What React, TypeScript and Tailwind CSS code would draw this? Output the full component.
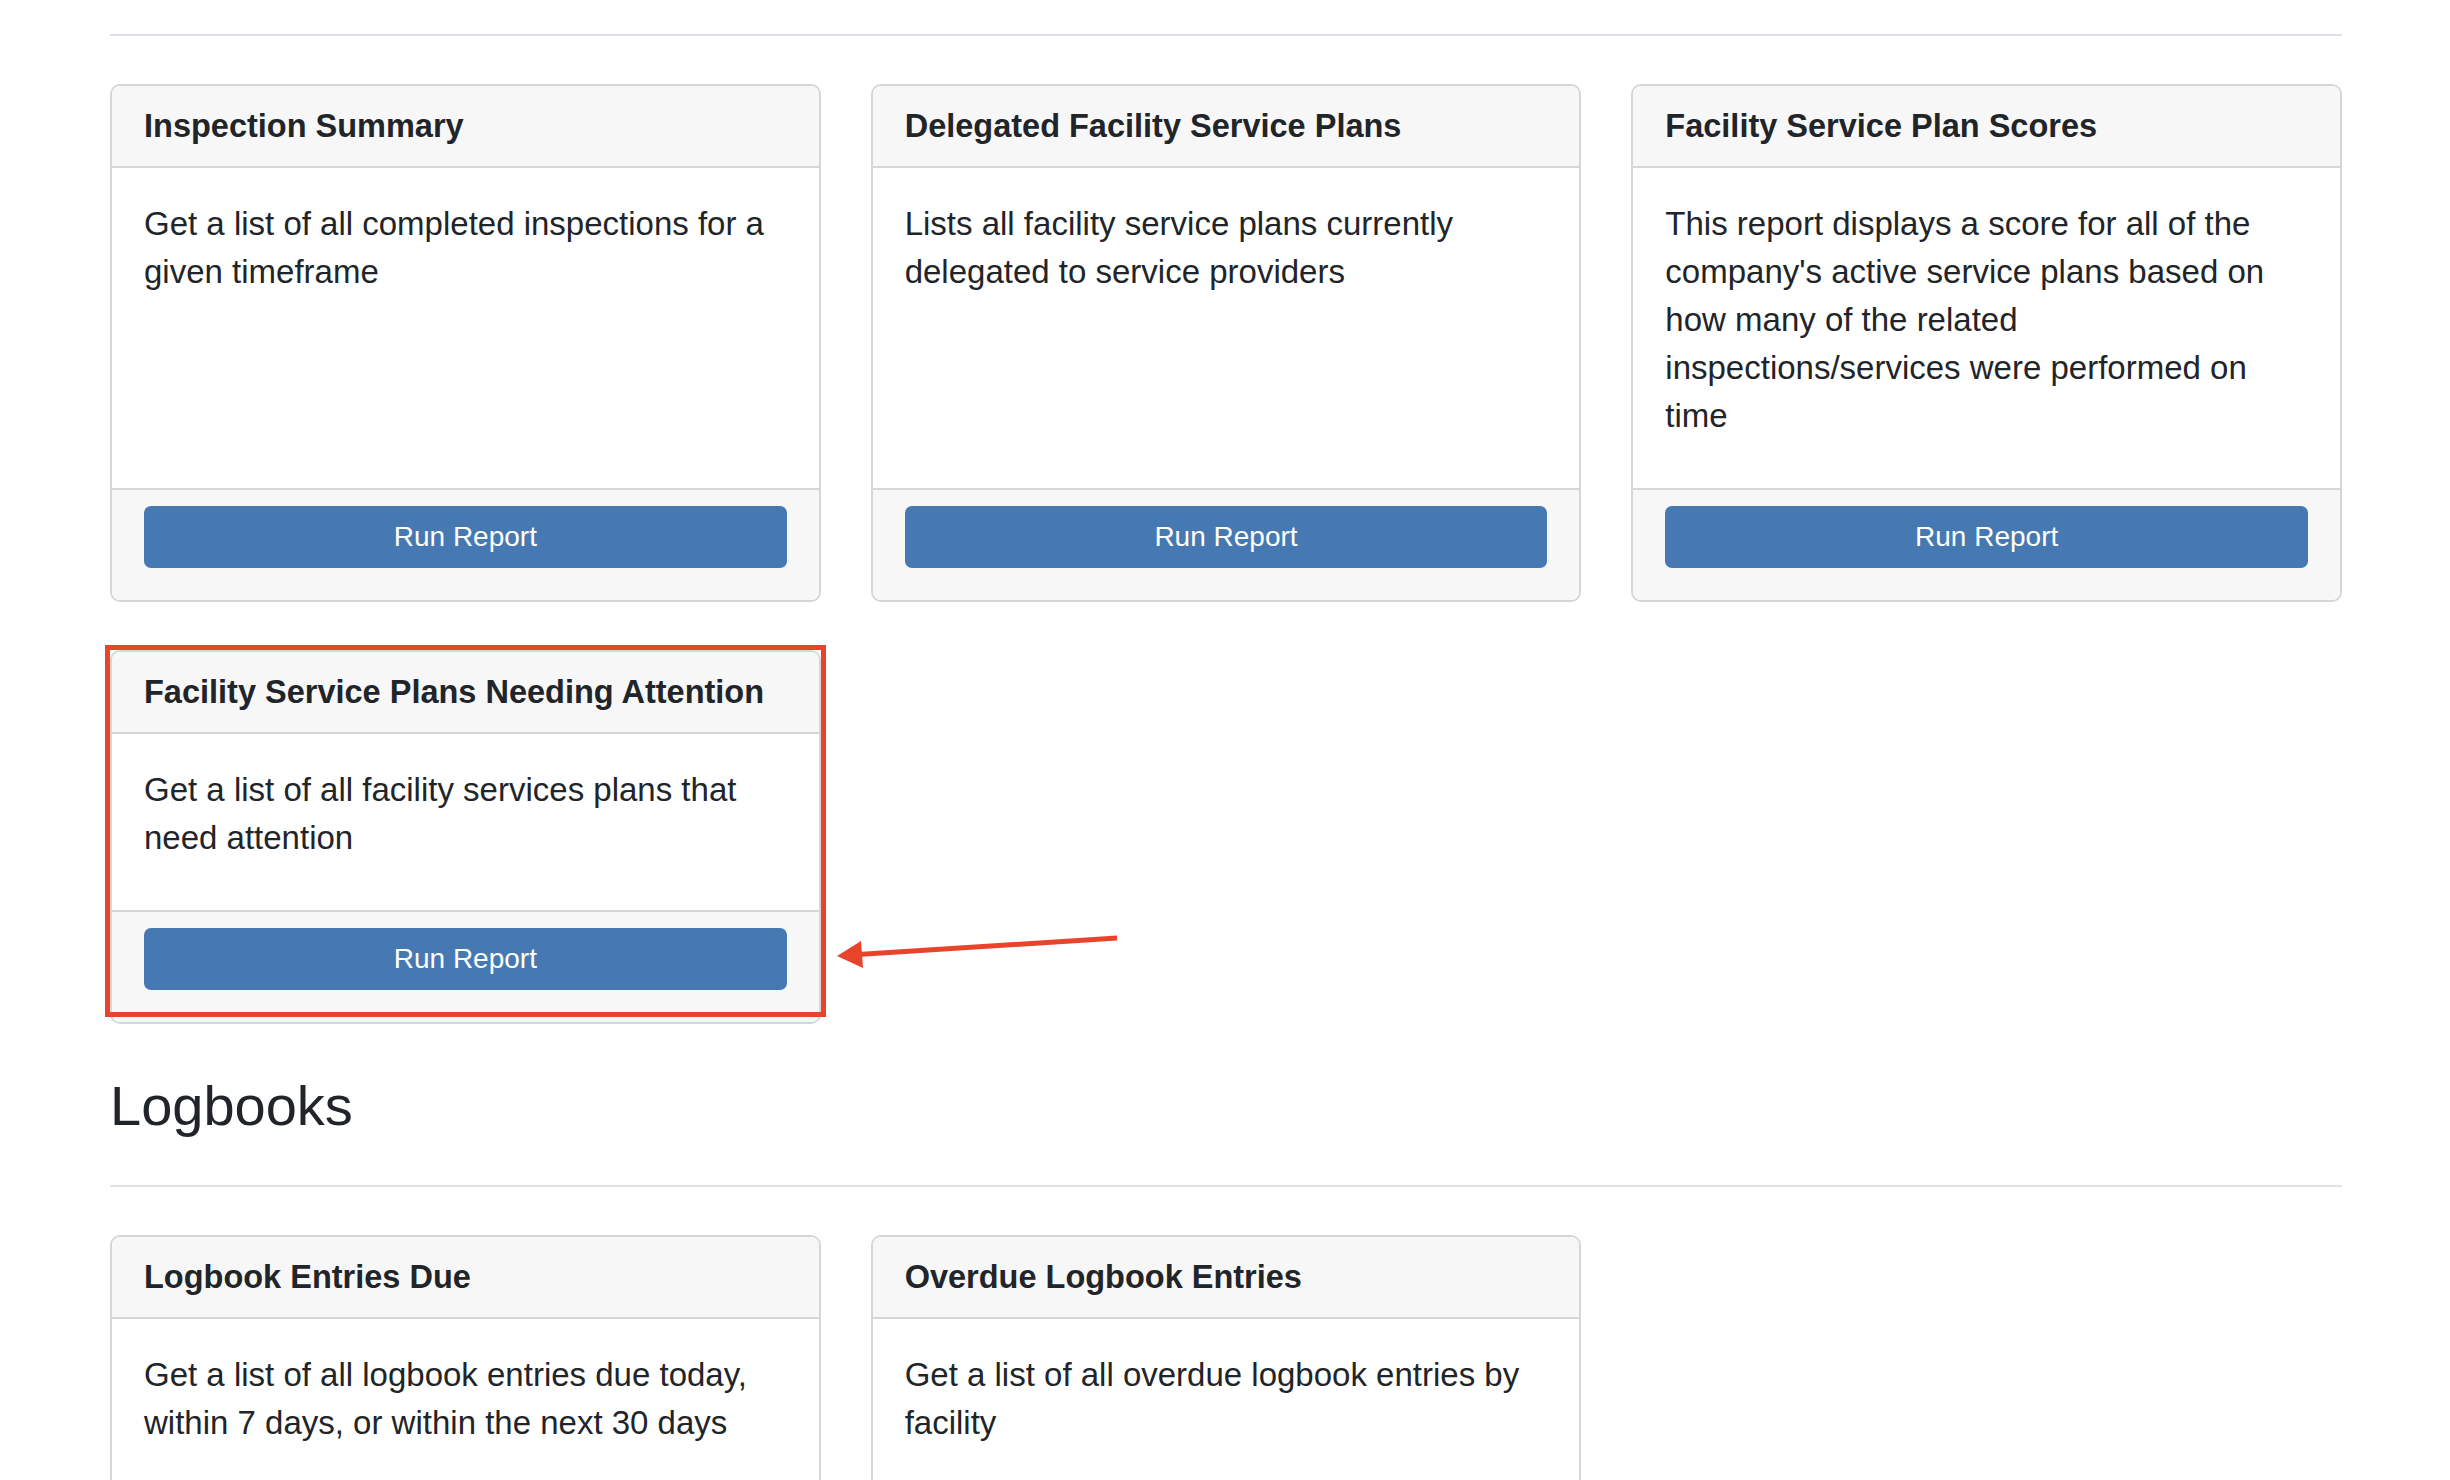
import React from 'react';

interface Report {
  title: string;
  description: string;
  highlighted?: boolean;
}

const FACILITY_REPORTS: Report[] = [
  {
    title: 'Inspection Summary',
    description: 'Get a list of all completed inspections for a given timeframe',
  },
  {
    title: 'Delegated Facility Service Plans',
    description: 'Lists all facility service plans currently delegated to service providers',
  },
  {
    title: 'Facility Service Plan Scores',
    description:
      "This report displays a score for all of the company's active service plans based on how many of the related inspections/services were performed on time",
  },
  {
    title: 'Facility Service Plans Needing Attention',
    description: 'Get a list of all facility services plans that need attention',
    highlighted: true,
  },
];

const LOGBOOK_REPORTS: Report[] = [
  {
    title: 'Logbook Entries Due',
    description: 'Get a list of all logbook entries due today, within 7 days, or within the next 30 days',
  },
  {
    title: 'Overdue Logbook Entries',
    description: 'Get a list of all overdue logbook entries by facility',
  },
];

function ReportCard({ report }: { report: Report }) {
  return (
    <div className="relative flex">
      <div className="flex flex-1 flex-col rounded-[10px] border-2 border-[#d6d6d6] bg-white">
        {/* Header */}
        <div className="rounded-t-[8px] border-b-2 border-[#d6d6d6] bg-[#f7f7f7] px-8 py-4">
          <h5 className="text-[32.5px] font-bold leading-[48px] text-[#212529]">{report.title}</h5>
        </div>

        {/* Body */}
        <div className="flex-1 px-8 pt-8 pb-8">
          <p className="mb-4 text-[33px] leading-[48px] text-[#212529]">{report.description}</p>
        </div>

        {/* Footer */}
        <div className="rounded-b-[8px] border-t-2 border-[#d6d6d6] bg-[#f7f7f7] px-8 pt-4 pb-8">
          <button className="flex h-[62px] w-full items-center justify-center rounded-[7px] bg-[#4679b2] text-[28px] text-white">
            Run Report
          </button>
        </div>
      </div>

      {report.highlighted && (
        <>
          <div className="pointer-events-none absolute -left-[5px] -top-[5px] h-[372px] w-[721px] border-[5px] border-[#e8432b]" />
          <svg
            className="pointer-events-none absolute left-[720px] top-[280px]"
            width="300"
            height="44"
            viewBox="0 0 300 44"
          >
            <line x1="287" y1="8" x2="28" y2="24.6" stroke="#e8432b" strokeWidth="5" />
            <polygon points="7,26 31,11 33,38" fill="#e8432b" />
          </svg>
        </>
      )}
    </div>
  );
}

export default function App() {
  return (
    <div
      className="h-[1480px] overflow-hidden bg-white"
      style={{ fontFamily: '"Liberation Sans", Arial, sans-serif' }}
    >
      <div className="ml-[110px] w-[2232px] pt-[34px]">
        <div className="h-[2px] bg-[#dee2e6]" />

        <div className="mt-[48px] grid grid-cols-3 gap-x-[50px] gap-y-[48px]">
          {FACILITY_REPORTS.map((r) => (
            <ReportCard key={r.title} report={r} />
          ))}
        </div>

        <h2 className="mt-[48px] text-[56px] leading-[67px] text-[#212529]">Logbooks</h2>
        <div className="mt-[46px] h-[2px] bg-[#dee2e6]" />

        <div className="mt-[48px] grid grid-cols-3 gap-x-[50px] gap-y-[48px]">
          {LOGBOOK_REPORTS.map((r) => (
            <ReportCard key={r.title} report={r} />
          ))}
        </div>
      </div>
    </div>
  );
}
